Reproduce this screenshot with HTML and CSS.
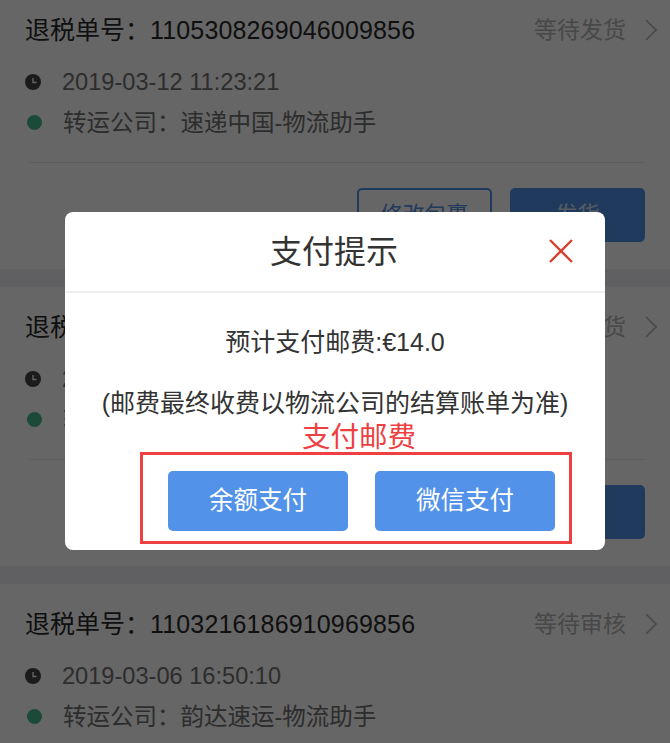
FILE: index.html
```html
<!DOCTYPE html>
<html lang="zh">
<head>
<meta charset="utf-8">
<title>支付提示</title>
<link rel="stylesheet" href="styles.css">
</head>
<body>
<div class="page">
  <section class="card">
    <div class="head"><span class="order">退税单号：<b>1105308269046009856</b></span><span class="status">等待发货</span><svg class="chev" viewBox="0 0 12 22"><path d="M1 1l10 10L1 21"/></svg></div>
    <div class="row"><svg class="clock" viewBox="0 0 16 16"><circle cx="8" cy="8" r="8"/><path d="M8 4v4.500h3.500"/></svg><span class="num">2019-03-12 11:23:21</span></div>
    <div class="row"><i class="dot"></i><span class="cjk">转运公司：速递中国-物流助手</span></div>
    <hr class="rule">
    <div class="actions"><button class="btn ghost">修改包裹</button><button class="btn solid">发货</button></div>
  </section>
  <section class="card">
    <div class="head"><span class="order">退税单号：<b>1105308269046009856</b></span><span class="status">等待发货</span><svg class="chev" viewBox="0 0 12 22"><path d="M1 1l10 10L1 21"/></svg></div>
    <div class="row"><svg class="clock" viewBox="0 0 16 16"><circle cx="8" cy="8" r="8"/><path d="M8 4v4.500h3.500"/></svg><span class="num">2019-03-12 11:23:21</span></div>
    <div class="row"><i class="dot"></i><span class="cjk">转运公司：速递中国-物流助手</span></div>
    <hr class="rule">
    <div class="actions"><button class="btn ghost">修改包裹</button><button class="btn solid">发货</button></div>
  </section>
  <section class="card">
    <div class="head"><span class="order">退税单号：<b>1103216186910969856</b></span><span class="status">等待审核</span><svg class="chev" viewBox="0 0 12 22"><path d="M1 1l10 10L1 21"/></svg></div>
    <div class="row"><svg class="clock" viewBox="0 0 16 16"><circle cx="8" cy="8" r="8"/><path d="M8 4v4.500h3.500"/></svg><span class="num">2019-03-06 16:50:10</span></div>
    <div class="row"><i class="dot"></i><span class="cjk">转运公司：韵达速运-物流助手</span></div>
  </section>
</div>
<div class="overlay"></div>
<div class="modal">
  <div class="modal-head">
    <h2>支付提示</h2>
    <svg class="close" viewBox="0 0 24 24"><path d="M1 1l22 22M23 1L1 23"/></svg>
  </div>
  <div class="modal-body">
    <p>预计支付邮费:€14.0</p>
    <p class="note">(邮费最终收费以物流公司的结算账单为准)</p>
  </div>
  <div class="pay"><button class="pay-btn">余额支付</button><button class="pay-btn">微信支付</button></div>
</div>
<div class="mark-label">支付邮费</div>
<div class="mark-box"></div>
</body>
</html>
```
FILE: styles.css
```css
* { box-sizing: border-box; }
html, body { margin: 0; height: 743px; overflow: hidden; }
body { background: #f0f1f5; font-family: "Liberation Sans", "Noto Sans CJK SC", sans-serif; color: #222; position: relative; }
.page { margin-top: -10px; display: flex; flex-direction: column; gap: 18px; }
.card { background: #fff; height: 279px; padding: 22px 25px 0; flex: none; }
.head { display: flex; align-items: center; height: 36px; margin-bottom: 13px; }
.order { font-size: 25px; line-height: 32px; flex: 1; color: #2a2a2a; white-space: nowrap; }
.order b { font-weight: 400; letter-spacing: .15px; }
.status { font-size: 23px; line-height: 32px; color: #b4b4b4; margin-right: 19px; }
.chev { width: 12px; height: 22px; margin-right: -12px; fill: none; stroke: #b4b4b4; stroke-width: 1.6; }
.row { display: flex; align-items: center; height: 41px; font-size: 23.500px; color: #707070; }
.row span { white-space: nowrap; line-height: 30px; }
.row .num { font-size: 23.600px; margin-left: -1px; margin-top: 1px; }
.clock { width: 16px; height: 16px; margin-right: 22px; flex: none; }
.clock circle { fill: #444; }
.clock path { fill: none; stroke: #fff; stroke-width: 1.3; }
.dot { width: 15px; height: 15px; border-radius: 50%; background: #45b98c; margin: 0 21px 0 2px; flex: none; }
.rule { border: 0; border-top: 1px solid #e6e6e6; margin: 19px 0 25px 4px; }
.actions { display: flex; justify-content: flex-end; gap: 18px; }
.btn { width: 135px; height: 54px; border-radius: 5px; font: 22px/30px "Liberation Sans", "Noto Sans CJK SC", sans-serif; padding: 0; }
.ghost { background: #fff; border: 2px solid #5292e8; color: #5292e8; }
.solid { background: #5292e8; border: 0; color: #d8e4f4; }
.overlay { position: absolute; inset: 0; background: rgba(0,0,0,.6); }
.modal { position: absolute; left: 65px; top: 212px; width: 540px; height: 338px; background: #fff; border-radius: 8px; display: flex; flex-direction: column; z-index: 2; }
.modal-head { height: 81px; flex: none; border-bottom: 2px solid #eee; position: relative; display: flex; align-items: center; justify-content: center; }
.modal-head h2 { margin: -6px 0 0 -2px; font-size: 32px; font-weight: 400; color: #333; }
.close { position: absolute; right: 32px; top: 27px; width: 24px; height: 24px; fill: none; stroke: #d6402f; stroke-width: 2.4; }
.modal-body { text-align: center; font-size: 25px; color: #333; padding-top: 32px; }
.modal-body p { margin: 0; height: 34px; line-height: 34px; }
.modal-body .note { margin-top: 27px; }
.pay { position: absolute; left: 103px; top: 259px; display: flex; gap: 27px; }
.pay-btn { width: 180px; height: 60px; border: 0; border-radius: 5px; background: #5292e8; color: #fff; font: 24.500px/30px "Liberation Sans", "Noto Sans CJK SC", sans-serif; padding: 0; }
.mark-label { position: absolute; left: 302px; top: 414px; font: 28.500px "Liberation Serif", "Noto Sans CJK SC", serif; color: #ee3f43; z-index: 3; }
.mark-box { position: absolute; left: 140px; top: 452px; width: 432px; height: 92px; border: 3px solid #ee3f43; z-index: 3; }
```
